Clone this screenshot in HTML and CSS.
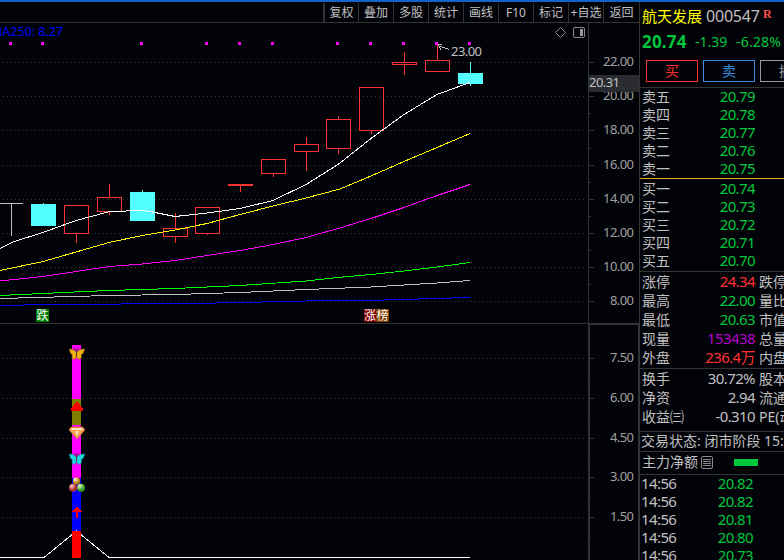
FILE: index.html
```html
<!DOCTYPE html>
<html lang="zh-CN">
<head>
    <meta charset="UTF-8">
    <title>航天发展 000547</title>
    <link rel="stylesheet" href="styles.css">
</head>
<body>
<div class="app">
    <div class="main">
        <div class="toolbar">
            <span class="tool">复权</span>
            <span class="tool">叠加</span>
            <span class="tool">多股</span>
            <span class="tool">统计</span>
            <span class="tool">画线</span>
            <span class="tool">F10</span>
            <span class="tool">标记</span>
            <span class="tool">+自选</span>
            <span class="tool">返回</span>
        </div>

        <svg class="chart" width="639" height="537" viewBox="0 23 639 537">
            <!-- Grid -->
            <path class="grid" d="M3 62.5H586M3 96.5H586M3 130.5H586M3 165.5H586M3 199.5H586M3 233.5H586M3 267.5H586M3 301.5H586M3 358.5H586M3 398.5H586M3 438.5H586M3 477.5H586M3 517.5H586"/>

            <!-- Axis -->
            <path class="axis" d="M588.5 23V323M589 62.5h5M589 96.5h5M589 130.5h5M589 165.5h5M589 199.5h5M589 233.5h5M589 267.5h5M589 301.5h5M589 113.5h2M589 148.5h2M589 182.5h2M589 216.5h2M589 250.5h2M589 284.5h2M0 323.5H639"/>
            <path class="axis" d="M590 358.5h4M590 398.5h4M590 438.5h4M590 477.5h4M590 517.5h4M590 378.5h1M590 418.5h1M590 458.5h1M590 497.5h1M590 537.5h1"/>
            <path class="axis thick" d="M589 560V324H639V560"/>
            <g class="axis-text">
                <text x="603" y="66" textLength="31">22.00</text>
                <text x="603" y="100" textLength="31">20.00</text>
                <text x="603" y="134" textLength="31">18.00</text>
                <text x="603" y="169" textLength="31">16.00</text>
                <text x="603" y="203" textLength="31">14.00</text>
                <text x="603" y="237" textLength="31">12.00</text>
                <text x="603" y="271" textLength="31">10.00</text>
                <text x="610" y="305" textLength="24">8.00</text>
                <text x="610" y="362" textLength="24">7.50</text>
                <text x="610" y="402" textLength="24">6.00</text>
                <text x="610" y="442" textLength="24">4.50</text>
                <text x="610" y="481" textLength="24">3.00</text>
                <text x="610" y="521" textLength="24">1.50</text>
            </g>
            <rect class="cursor-price" x="589" y="75" width="50" height="17"/>
            <text class="label" x="589" y="87" textLength="31">20.31</text>

            <text class="ma-label" x="-9" y="36" textLength="72">MA250: 8.27</text>

            <!-- Signal dots -->
            <path class="dots" d="M9 43.5h3M41 43.5h3M140 43.5h3M205 43.5h3M238 43.5h3M271 43.5h3M336 43.5h3M369 43.5h3M402 43.5h3M435 43.5h3M468 43.5h3"/>

            <!-- Candles -->
            <path class="flat" d="M0 203.5H23M11.5 203V236"/>
            <g class="up">
                <path d="M64.5 205.5h24v28h-24zM76.5 234v9"/>
                <path d="M97.5 197.5h24v14h-24zM109.5 184v13M109.5 212v3"/>
                <path d="M163.5 228.5h24v8h-24zM175.5 213v15M175.5 237v6"/>
                <path d="M195.5 207.5h24v26h-24zM207.5 234v1"/>
                <path d="M228 184.5h25M228 185.5h25M240.5 186v6"/>
                <path d="M261.5 159.5h24v14h-24zM273.5 174v3"/>
                <path d="M294.5 144.5h24v7h-24zM306.5 137v7M306.5 152v19"/>
                <path d="M326.5 119.5h24v29h-24zM338.5 116v3M338.5 149v5"/>
                <path d="M359.5 87.5h24v43h-24zM371.5 131v3"/>
                <path d="M392.5 62.5h24v2h-24zM404.5 52v10M404.5 65v10"/>
                <path d="M425.5 60.5h24v11h-24zM437.5 45v15"/>
            </g>
            <g class="down">
                <rect x="31" y="204" width="25" height="22"/>
                <rect x="43" y="203" width="1" height="1"/>
                <rect x="130" y="192" width="25" height="29"/>
                <rect x="142" y="190" width="1" height="2"/>
                <rect x="458" y="73" width="25" height="11"/>
                <rect x="470" y="62" width="1" height="24"/>
            </g>

            <!-- Moving averages -->
            <g class="ma">
                <polyline class="ma5" points="0,248.5 14,241.5 43,232.5 76,220.5 108,212 126,211 142,210.5 150,211.5 175,216.5 207,213 240,208.5 273,200.5 306,184.5 338,164.5 371,138.5 404,114.5 437,94.5 470,82.5"/>
                <polyline class="ma10" points="0,270.5 43,261.5 109,242.5 142,235.5 175,230 207,223.5 240,214.5 273,206 306,198 340,189 371,176 404,161.5 437,147.5 470,133.5"/>
                <polyline class="ma20" points="0,281 43,276.5 109,266.5 142,264 175,260.5 207,255.5 240,250.5 273,244.5 306,237.5 338,228.5 371,218.5 404,207.5 437,195.5 470,184.5"/>
                <polyline class="ma60" points="0,295.5 43,293.5 85,291.5 109,290.5 175,288.5 240,285.5 306,281 338,277.5 371,274.5 404,271 437,267 470,262.5"/>
                <polyline class="ma120" points="0,298.5 43,297.3 109,295.5 175,294.5 240,292.5 306,289.5 371,287 404,285 437,283 470,280.5"/>
                <polyline class="ma250" points="0,305.5 43,304.6 109,304.3 142,303.5 207,303.2 240,302.5 306,301 371,300.4 404,299.4 437,298.5 470,297.4"/>
            </g>

            <path class="flat" d="M438 45.5L449 49.5M438 44.5h4M438.5 45L441 50"/>
            <text class="label" x="451" y="56" textLength="31">23.00</text>

            <!-- Pane buttons -->
            <path class="pane-icon" d="M560.5 27.5l5 5l-5 5l-5-5z"/>
            <rect class="pane-icon" x="573.5" y="27.5" width="11" height="10" rx="1.5"/>
            <rect class="pane-fill" x="580" y="29" width="3" height="7"/>

            <!-- Event tags -->
            <g class="tags">
                <rect x="36" y="309" width="13" height="13" fill="#008000"/>
                <rect x="364" y="309" width="12" height="13" fill="#800000"/>
                <rect x="376" y="309" width="13" height="13" fill="#804000"/>
                <text x="36.5" y="320">跌</text>
                <text x="364" y="320">涨</text>
                <text x="376.5" y="320">榜</text>
            </g>

            <!-- Signal column -->
            <g class="column">
                <rect x="72" y="345" width="9" height="54" fill="#ff00ff"/>
                <rect x="72" y="399" width="9" height="26" fill="#808000"/>
                <rect x="72" y="425" width="9" height="53" fill="#ff00ff"/>
                <rect x="72" y="478" width="9" height="53" fill="#0000ff"/>
                <polyline class="signal" points="0,557.5 44,557.5 76.5,531 109,557.5 470,557.5"/>
                <rect x="72" y="531" width="9" height="27" fill="#ff0000"/>
            </g>

            <defs>
                <g id="butterfly">
                    <path d="M7.5 5.5C6 3.5 3 1.8.5 2C.7 4.500 1.500 7 3.500 8C2.800 9.500 3 11.500 4.500 12.300C6 12 7 10.800 7.500 9.500C8 10.800 9 12 10.500 12.300C12.500 11.500 13 9.500 12 8C14 7 15.300 4.500 15.500 2C12.500 1.800 9 3.500 7.500 5.500Z" stroke-width=".7"/>
                    <path d="M7.500 9.500V4.500L5.500 1M7.500 4.500L9.500 1" fill="none" stroke="#3a2818" stroke-width=".9"/>
                </g>
                <radialGradient id="gold" cx=".35" cy=".3"><stop offset="0" stop-color="#fff8d0"/><stop offset="1" stop-color="#b87818"/></radialGradient>
                <radialGradient id="red" cx=".35" cy=".3"><stop offset="0" stop-color="#ffd0c8"/><stop offset="1" stop-color="#b03028"/></radialGradient>
                <radialGradient id="green" cx=".35" cy=".3"><stop offset="0" stop-color="#e8ffd8"/><stop offset="1" stop-color="#38a020"/></radialGradient>
            </defs>
            <use href="#butterfly" x="69" y="347" fill="#f0b010" stroke="#9a6808"/>
            <path d="M76 402h2l5 7v2H71v-2z" fill="#ff0000"/>
            <path class="gem" d="M71 427h12l2 3l-8 9l-8-9z" fill="#f4a050" stroke="#b86828" stroke-width=".7"/>
            <path class="gem" d="M72 428h10l1 2H71zM75 431h4l-2 6z" fill="#ffe0b8"/>
            <use href="#butterfly" x="69" y="452" fill="#20d8e0" stroke="#109098"/>
            <circle cx="76.5" cy="481" r="3.7" fill="url(#gold)"/>
            <circle cx="73" cy="487.7" r="4" fill="url(#red)"/>
            <circle cx="81" cy="487.7" r="4" fill="url(#green)"/>
            <path d="M77 506l5 6h-4v6h-2v-6h-4z" fill="#ff0000"/>
        </svg>
    </div>

    <div class="side">
        <div class="title">
            <span class="name">航天发展</span>
            <span class="code">000547</span>
            <span class="mark">R</span>
        </div>
        <div class="price">
            <span class="last">20.74</span>
            <span class="change">-1.39</span>
            <span class="percent">-6.28%</span>
        </div>
        <div class="orders">
            <span class="order buy">买</span>
            <span class="order sell">卖</span>
            <span class="order cancel">撤</span>
        </div>

        <div class="book asks">
            <div class="row"><span>卖五</span><b>20.79</b></div>
            <div class="row"><span>卖四</span><b>20.78</b></div>
            <div class="row"><span>卖三</span><b>20.77</b></div>
            <div class="row"><span>卖二</span><b>20.76</b></div>
            <div class="row"><span>卖一</span><b>20.75</b></div>
        </div>
        <div class="book bids">
            <div class="row"><span>买一</span><b>20.74</b></div>
            <div class="row"><span>买二</span><b>20.73</b></div>
            <div class="row"><span>买三</span><b>20.72</b></div>
            <div class="row"><span>买四</span><b>20.71</b></div>
            <div class="row"><span>买五</span><b>20.70</b></div>
        </div>

        <div class="stats quote-stats">
            <div class="row"><span>涨停</span><b class="red">24.34</b><i>跌停</i></div>
            <div class="row"><span>最高</span><b>22.00</b><i>量比</i></div>
            <div class="row"><span>最低</span><b>20.63</b><i>市值</i></div>
            <div class="row"><span>现量</span><b class="purple">153438</b><i>总量</i></div>
            <div class="row"><span>外盘</span><b class="red">236.4万</b><i>内盘</i></div>
        </div>
        <div class="stats base-stats">
            <div class="row"><span>换手</span><b class="gray">30.72%</b><i>股本</i></div>
            <div class="row"><span>净资</span><b class="gray">2.94</b><i>流通</i></div>
            <div class="row"><span>收益㈢</span><b class="gray">-0.310</b><i>PE(动)</i></div>
        </div>

        <div class="status">交易状态: 闭市阶段 15:00</div>
        <div class="flow">
            <span>主力净额</span>
            <svg class="list-icon" width="12" height="13" viewBox="0 0 12 13"><rect x=".5" y=".5" width="11" height="12" rx="1.5"/><path d="M2 3.5h8M2 5.5h8M2 7.5h8M2 9.5h8"/></svg>
            <span class="flow-bar"></span>
        </div>

        <div class="ticks">
            <div class="row"><span>14:56</span><b>20.82</b></div>
            <div class="row"><span>14:56</span><b>20.82</b></div>
            <div class="row"><span>14:56</span><b>20.81</b></div>
            <div class="row"><span>14:56</span><b>20.80</b></div>
            <div class="row"><span>14:56</span><b>20.73</b></div>
        </div>
    </div>
</div>
</body>
</html>
```
FILE: styles.css
```css
* {
    box-sizing: border-box;
}
body {
    margin: 0;
    height: 560px;
    overflow: hidden;
    background-color: #020209;
    color: #c0c0c0;
    font-family: "Noto Sans", "Noto Sans CJK SC", sans-serif;
    font-size: 14px;
    white-space: nowrap;
}
.app {
    display: flex;
    height: 560px;
    border-top: 2px solid #1464c8;
}
.main {
    width: 639px;
    flex-shrink: 0;
}
.toolbar {
    display: flex;
    justify-content: flex-end;
    height: 21px;
    padding-top: 1px;
    border-bottom: 1px solid #333;
}
.tool {
    width: 35px;
    height: 19px;
    border-left: 1px solid #333;
    font-size: 12px;
    line-height: 19px;
    text-align: center;
    overflow: hidden;
}
.tool:first-child {
    border-left-width: 2px;
}
.tool:last-child {
    width: 36px;
}

/* Chart */
.chart {
    display: block;
    font-size: 13px;
}
.chart path, .chart rect, .chart polyline {
    shape-rendering: crispEdges;
}
.grid {
    stroke: #343434;
    stroke-dasharray: 1 3;
}
.axis {
    fill: none;
    stroke: #343434;
}
.thick {
    stroke-width: 2;
}
.axis-text {
    fill: #a0a0a0;
}
.cursor-price {
    fill: #2a2c32;
}
.label {
    fill: #c0c0c0;
}
.ma-label {
    fill: #0000ff;
    font-size: 12.5px;
}
.dots {
    stroke: #ff00ff;
    stroke-width: 3;
}
.flat {
    fill: none;
    stroke: #c0c0c0;
}
.up {
    fill: none;
    stroke: #ff3232;
}
.down {
    fill: #54ffff;
}
.ma, .signal {
    fill: none;
}
.ma5, .signal {
    stroke: #fff;
}
.ma10 {
    stroke: #ffff00;
}
.ma20 {
    stroke: #ff00ff;
}
.ma60 {
    stroke: #00ff00;
}
.ma120 {
    stroke: #c0c0c0;
}
.ma250 {
    stroke: #0000ff;
}
.chart .pane-icon {
    fill: none;
    stroke: #888;
    shape-rendering: auto;
}
.pane-fill {
    fill: #999;
}
.tags text {
    fill: #fff;
    font-size: 12px;
}
.chart #butterfly path, .chart .gem {
    shape-rendering: auto;
}

/* Quote panel */
.side {
    width: 145px;
    border-left: 1px solid #343434;
    overflow: hidden;
}
.title {
    display: flex;
    height: 28px;
    padding-left: 2px;
    line-height: 29px;
}
.name {
    width: 64px;
    color: #ffff00;
    font-size: 15px;
}
.code {
    width: 57px;
    font-size: 16px;
    letter-spacing: -0.2px;
}
.mark {
    color: #ff5050;
    font: bold 12px/25px "Liberation Serif", serif;
}
.price {
    display: flex;
    height: 24px;
    padding-left: 2px;
    color: #00c83c;
    line-height: 23px;
}
.last {
    width: 53px;
    font-size: 17px;
    font-weight: bold;
    letter-spacing: 0.2px;
}
.change {
    width: 41px;
}
.percent {
    letter-spacing: 0.2px;
}
.orders {
    display: flex;
    gap: 5px;
    height: 34px;
    padding: 6px 0 0 6px;
    border-bottom: 1px solid #343434;
}
.order {
    width: 52px;
    height: 22px;
    flex-shrink: 0;
    border: 1px solid;
    line-height: 20px;
    text-align: center;
}
.buy {
    color: #ff3232;
}
.sell {
    color: #3c8cdc;
}
.cancel {
    color: #999;
}
.row {
    display: flex;
    height: 18px;
    padding-left: 2px;
    line-height: 17px;
}
.row span {
    width: 50px;
    flex-shrink: 0;
}
.row b {
    width: 63px;
    flex-shrink: 0;
    color: #00c83c;
    font-size: 15px;
    font-weight: normal;
    letter-spacing: -0.6px;
    line-height: 16px;
    text-align: right;
}
.row i {
    margin-left: 4px;
    font-style: normal;
}
.row .red {
    color: #ff3232;
}
.row .purple {
    color: #b400c8;
}
.row .gray {
    color: #c0c0c0;
}
.asks {
    height: 91px;
    border-bottom: 1px solid #e6a028;
}
.bids {
    height: 93px;
    padding-top: 1px;
    border-bottom: 1px solid #343434;
}
.stats .row {
    height: 19px;
    line-height: 19px;
}
.stats .row b {
    line-height: 18px;
}
.quote-stats {
    height: 97px;
    border-bottom: 1px solid #343434;
}
.base-stats {
    height: 63px;
    border-bottom: 1px solid #343434;
}
.status {
    height: 20px;
    padding-left: 1px;
    border-bottom: 1px solid #343434;
    line-height: 17px;
}
.flow {
    display: flex;
    align-items: center;
    height: 23px;
    padding: 0 0 2px 2px;
    border-bottom: 1px solid #343434;
    line-height: 20px;
}
.list-icon {
    margin-left: 3px;
    fill: none;
    stroke: #888;
}
.flow-bar {
    width: 24px;
    height: 7px;
    margin-left: 21px;
    background-color: #00c83c;
}
.ticks .row {
    padding-left: 1px;
}
.ticks .row span {
    font-size: 15px;
    letter-spacing: -0.6px;
    line-height: 16px;
}
.ticks .row b {
    width: 62px;
}
```
